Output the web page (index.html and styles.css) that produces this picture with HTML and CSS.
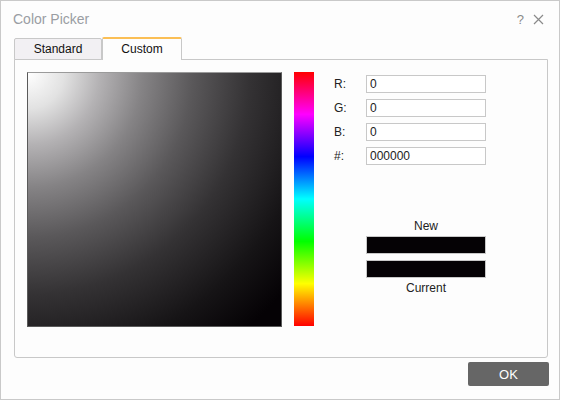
FILE: index.html
```html
<!DOCTYPE html>
<html>
<head>
<meta charset="utf-8">
<link rel="stylesheet" href="styles.css">
</head>
<body>
<div class="window">
  <div class="header">
    <span class="title">Color Picker</span>
    <div class="controls">
      <span class="help">?</span>
      <svg class="close" width="11" height="11" viewBox="0 0 11 11"><path d="M1 1L10 10M10 1L1 10" stroke="#8a8a8a" stroke-width="1.2" fill="none"/></svg>
    </div>
  </div>
  <div class="tabs">
    <div class="tab">Standard</div>
    <div class="tab active">Custom</div>
  </div>
  <div class="panel">
    <div class="square"></div>
    <div class="hue"></div>
    <div class="fields">
      <div class="row"><span class="lbl">R:</span><div class="input">0</div></div>
      <div class="row"><span class="lbl">G:</span><div class="input">0</div></div>
      <div class="row"><span class="lbl">B:</span><div class="input">0</div></div>
      <div class="row"><span class="lbl">#:</span><div class="input">000000</div></div>
      <div class="preview">
        <div class="cap">New</div>
        <div class="swatch"></div>
        <div class="swatch second"></div>
        <div class="cap">Current</div>
      </div>
    </div>
  </div>
  <div class="footer">
    <div class="ok">OK</div>
  </div>
</div>
</body>
</html>
```
FILE: styles.css
```css
* { box-sizing: border-box; }
body {
  margin: 0;
  font-family: "Liberation Sans", Arial, sans-serif;
  background: #fff;
}
.window {
  width: 560px;
  height: 400px;
  border: 1px solid #c9c9c9;
  background: #fdfdfd;
  display: flex;
  flex-direction: column;
}
.header {
  height: 36px;
  display: flex;
  align-items: center;
  justify-content: space-between;
  padding: 0 15px 0 12px;
}
.title {
  font-size: 14px;
  color: #9a9da3;
}
.controls {
  display: flex;
  align-items: center;
  gap: 9px;
}
.help {
  font-size: 13px;
  color: #8a8a8a;
}
.tabs {
  display: flex;
  align-items: flex-end;
  height: 23px;
  margin: 0 0 -1px 13px;
  position: relative;
  z-index: 1;
}
.tab {
  width: 88px;
  height: 22px;
  background: #f2f0f3;
  border: 1px solid #c8c8c8;
  border-radius: 2px 2px 0 0;
  font-size: 12px;
  color: #111;
  display: flex;
  align-items: center;
  justify-content: center;
  padding-bottom: 1px;
}
.tab.active {
  width: 80px;
  height: 23px;
  background: #fdfdfd;
  border-top: 2px solid #fbbf55;
  border-bottom: none;
  border-left: 1px solid #c8c8c8;
  padding-bottom: 1px;
}
.panel {
  width: 534px;
  height: 299px;
  margin-left: 13px;
  border: 1px solid #c8c8c8;
  border-radius: 0 0 3px 3px;
  background: #fdfdfd;
  display: flex;
  align-items: flex-start;
  padding: 12px 0 0 12px;
}
.square {
  width: 255px;
  height: 255px;
  border: 1px solid #5a5a5a;
  border-top-color: #9a9a9a;
  background: radial-gradient(circle at 0 0, #ffffff 0%, #e2e2e2 10%, #b4b2b4 20%, #858385 32%, #5a585a 46%, #343234 62%, #161416 80%, #050205 94%);
}
.hue {
  width: 20px;
  height: 254px;
  margin-left: 12px;
  background: linear-gradient(to bottom, #ff0000 0%, #ff00ff 16.67%, #0000ff 33.33%, #00ffff 50%, #00ff00 66.67%, #ffff00 83.33%, #ff0000 100%);
}
.fields {
  margin-left: 20px;
  margin-top: 3px;
  display: flex;
  flex-direction: column;
  gap: 6px;
}
.row {
  display: flex;
  align-items: center;
  height: 18px;
}
.lbl {
  width: 32px;
  font-size: 12px;
  color: #222;
}
.input {
  width: 120px;
  height: 18px;
  border: 1px solid #c8c8c8;
  background: #fff;
  font-size: 12px;
  color: #222;
  padding-left: 3px;
  line-height: 16px;
}
.preview {
  margin-left: 32px;
  margin-top: 48px;
  width: 120px;
  display: flex;
  flex-direction: column;
  align-items: stretch;
}
.cap {
  font-size: 12px;
  line-height: 14px;
  color: #222;
  text-align: center;
}
.swatch {
  height: 18px;
  border: 1px solid #c8c8c8;
  background: #050205;
  margin-top: 3px;
}
.swatch.second {
  margin-top: 6px;
  margin-bottom: 3px;
}
.footer {
  display: flex;
  justify-content: flex-end;
  padding: 4px 10px 0 0;
}
.ok {
  width: 81px;
  height: 24px;
  background: #666666;
  border-radius: 2px;
  color: #fff;
  font-size: 13px;
  display: flex;
  align-items: center;
  justify-content: center;
}
```
